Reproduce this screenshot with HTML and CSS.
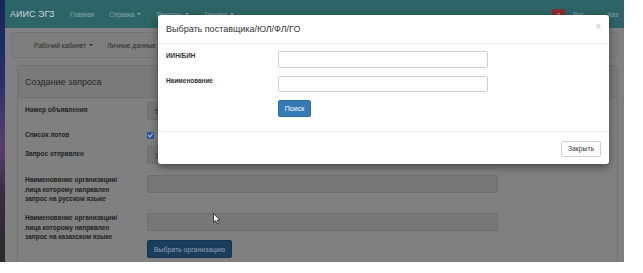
FILE: index.html
```html
<!DOCTYPE html>
<html lang="ru">
<head>
<meta charset="utf-8">
<title>АИИС ЭГЗ</title>
<link rel="stylesheet" href="styles.css">
</head>
<body>
<div class="screen">
  <div class="desk"></div>
  <div class="browser">
    <nav class="navbar">
      <span class="brand">АИИС ЭГЗ</span>
      <ul class="nav-links">
        <li>Главная</li>
        <li>Справка <span class="caret"></span></li>
        <li>Реестры <span class="caret"></span></li>
        <li>Закупки <span class="caret"></span></li>
      </ul>
      <div class="nav-right">
        <span class="badge">0</span>
        <span class="lang">Рус</span>
        <span class="lang last">Каз</span>
      </div>
    </nav>
    <div class="subnav">
      <span class="subnav-item">Рабочий кабинет <span class="caret dark"></span></span>
      <span class="subnav-item">Личные данные <span class="caret dark"></span></span>
    </div>
    <div class="panel">
      <div class="panel-heading">Создание запроса</div>
      <div class="panel-body">
        <div class="row r1">
          <div class="label">Номер объявления</div>
          <div class="field"><div class="input dis">5</div></div>
        </div>
        <div class="row r2">
          <div class="label">Список лотов</div>
          <div class="field"><span class="check"></span><span class="check-text">-</span></div>
        </div>
        <div class="row r3">
          <div class="label">Запрос отправлен</div>
          <div class="field"><div class="input dis">3</div></div>
        </div>
        <div class="row r4">
          <div class="label">Наименование организации/ лица которому направлен запрос на русском языке</div>
          <div class="field"><div class="input dis"></div></div>
        </div>
        <div class="row r5">
          <div class="label">Наименование организации/ лица которому направлен запрос на казахском языке</div>
          <div class="field">
            <div class="input dis"></div>
            <button class="btn-dark">Выбрать организацию</button>
          </div>
        </div>
      </div>
    </div>

    <svg class="cursor" width="8" height="12" viewBox="0 0 8 12"><path d="M0.5 0.5 L0.5 9.5 L2.6 7.6 L4.2 11 L5.6 10.3 L4.1 7.1 L7 7.1 Z" fill="#f4f4f4" stroke="#222" stroke-width="0.8"/></svg>

    <div class="modal">
      <div class="modal-header">
        <span class="modal-title">Выбрать поставщика/ЮЛ/ФЛ/ГО</span>
        <span class="close">×</span>
      </div>
      <div class="modal-body">
        <div class="mrow">
          <div class="mlabel">ИИН/БИН</div>
          <div class="minput"></div>
        </div>
        <div class="mrow">
          <div class="mlabel">Наименование</div>
          <div class="minput"></div>
        </div>
        <div class="mrow">
          <div class="mlabel"></div>
          <button class="btn-primary">Поиск</button>
        </div>
      </div>
      <div class="modal-footer">
        <button class="btn-default">Закрыть</button>
      </div>
    </div>
  </div>
</div>
</body>
</html>
```
FILE: styles.css
```css
* { box-sizing: border-box; }
html, body { margin: 0; padding: 0; background: #ffffff; }
body { font-family: "Liberation Sans", Arial, sans-serif; }

.screen { display: flex; width: 624px; height: 262px; }
.desk {
  width: 5px; flex: none;
  background: linear-gradient(180deg, #16265a 0%, #2a2f6a 30%, #5a3f70 55%, #3a2a40 75%, #2a2a2a 100%);
}
.browser {
  position: relative; flex: 1; overflow: hidden;
  background: #808080;
}

/* navbar */
.navbar {
  height: 28px; background: #2d6467;
  display: flex; align-items: center; padding-left: 5px;
}
.brand { color: #c9d6d6; font-size: 9px; flex: 0 0 60px; }
.nav-links { list-style: none; margin: 0; padding: 0; display: flex; gap: 15px; flex: none; }
.nav-links li { color: #86a9ab; font-size: 6.4px; display: flex; align-items: center; gap: 3px; }
.caret {
  display: inline-block; width: 0; height: 0;
  border-left: 2px solid transparent; border-right: 2px solid transparent;
  border-top: 2px solid #86a9ab;
}
.caret.dark { border-top-color: #2a2a2a; }
.nav-right { margin-left: auto; display: flex; align-items: center; padding-right: 2px; flex: none; }
.badge {
  background: #8e2a2a; color: #d8b0b0; font-size: 6.5px;
  width: 13px; height: 13px; margin-top: 3px; display: flex; align-items: center; justify-content: center;
  border-radius: 2px; margin-right: 8px;
}
.lang { color: #86a9ab; font-size: 6.4px; width: 35px; }
.lang.last { width: 14px; }

/* subnav */
.subnav {
  margin: 4px 6px 0 6px; height: 26px;
  border: 1px solid #747474; border-radius: 3px; background: #7e7e7e;
  display: flex; align-items: center; gap: 14px; padding-left: 22px;
}
.subnav-item { color: #2a2a2a; font-size: 6.6px; display: flex; align-items: center; gap: 3px; }

/* panel */
.panel {
  margin: 7px 6px 0 12px; height: 220px;
  border: 1px solid #717171; border-radius: 3px;
}
.panel-heading {
  height: 32px; background: #7a7a7a; border-bottom: 1px solid #717171;
  padding-left: 7px; display: flex; align-items: center;
  font-size: 9px; color: #262626;
}
.panel-body { padding: 4px 0 0 7px; }
.row { display: flex; align-items: flex-start; }
.label {
  width: 122px; flex: none; font-size: 6.5px; font-weight: bold; color: #202020;
  line-height: 9.5px; padding-right: 25px;
}
.field { width: 351px; }
.r1 { height: 18px; margin-bottom: 10px; }
.r1 .label, .r3 .label { padding-top: 3px; }
.r2 { height: 10px; margin-bottom: 6px; align-items: center; }
.r2 .field { display: flex; align-items: center; gap: 4px; }
.r3 { height: 18px; margin-bottom: 11px; }
.r4 { height: 29px; margin-bottom: 9px; }
.input {
  height: 18px; border: 1px solid #6e6e6e; border-radius: 2px;
  font-size: 7px; color: #333; padding: 0 0 0 7px; display: flex; align-items: center;
}
.input.dis { background: #777777; }
.check {
  width: 7px; height: 7px; background: #245a9e; border-radius: 1px; position: relative;
}
.check::after {
  content: ""; position: absolute; left: 2px; top: 0.5px; width: 2px; height: 4px;
  border: solid #c0c8d8; border-width: 0 1px 1px 0; transform: rotate(40deg);
}
.check-text { font-size: 7px; color: #333; }
.btn-dark {
  margin-top: 9px; height: 18px; width: 85px; padding: 0;
  background: #1b3d5c; border: 1px solid #163350; border-radius: 2px;
  color: #8ea2b6; font-family: inherit; font-size: 6.9px;
}

.cursor { position: absolute; left: 208px; top: 213px; }

/* modal */
.modal {
  position: absolute; left: 153px; top: 15px; width: 451px; height: 149px;
  background: #ffffff; border-radius: 3px;
  box-shadow: 0 3px 9px rgba(0,0,0,.45);
  display: flex; flex-direction: column;
}
.modal-header {
  height: 29px; border-bottom: 1px solid #e8e8e8;
  display: flex; align-items: center; padding: 0 8px;
}
.modal-title { font-size: 9px; color: #333; }
.close { margin-left: auto; color: #c4c4c4; font-size: 10px; margin-top: -6px; margin-right: 0; }
.modal-body {
  height: 88px; border-bottom: 1px solid #e8e8e8;
  padding: 7px 0 0 8px; display: flex; flex-direction: column; gap: 8px;
}
.mrow { display: flex; align-items: flex-start; }
.mlabel {
  width: 112px; flex: none; font-size: 6.4px; font-weight: bold; color: #333; padding-top: 1px;
}
.minput { width: 210px; height: 17px; border: 1px solid #cfcfcf; border-radius: 2px; }
.mrow + .mrow .minput { height: 16px; }
.btn-primary {
  width: 33px; height: 17px; padding: 0;
  background: #337ab7; border: 1px solid #2e6da4; border-radius: 2px;
  color: #ffffff; font-family: inherit; font-size: 7px;
}
.modal-footer { flex: 1; display: flex; align-items: center; justify-content: flex-end; padding-right: 8px; }
.btn-default {
  width: 40px; height: 16px; padding: 0; margin-top: 1px;
  background: #ffffff; border: 1px solid #d0d0d0; border-radius: 2px;
  color: #333; font-family: inherit; font-size: 6.8px;
}
```
